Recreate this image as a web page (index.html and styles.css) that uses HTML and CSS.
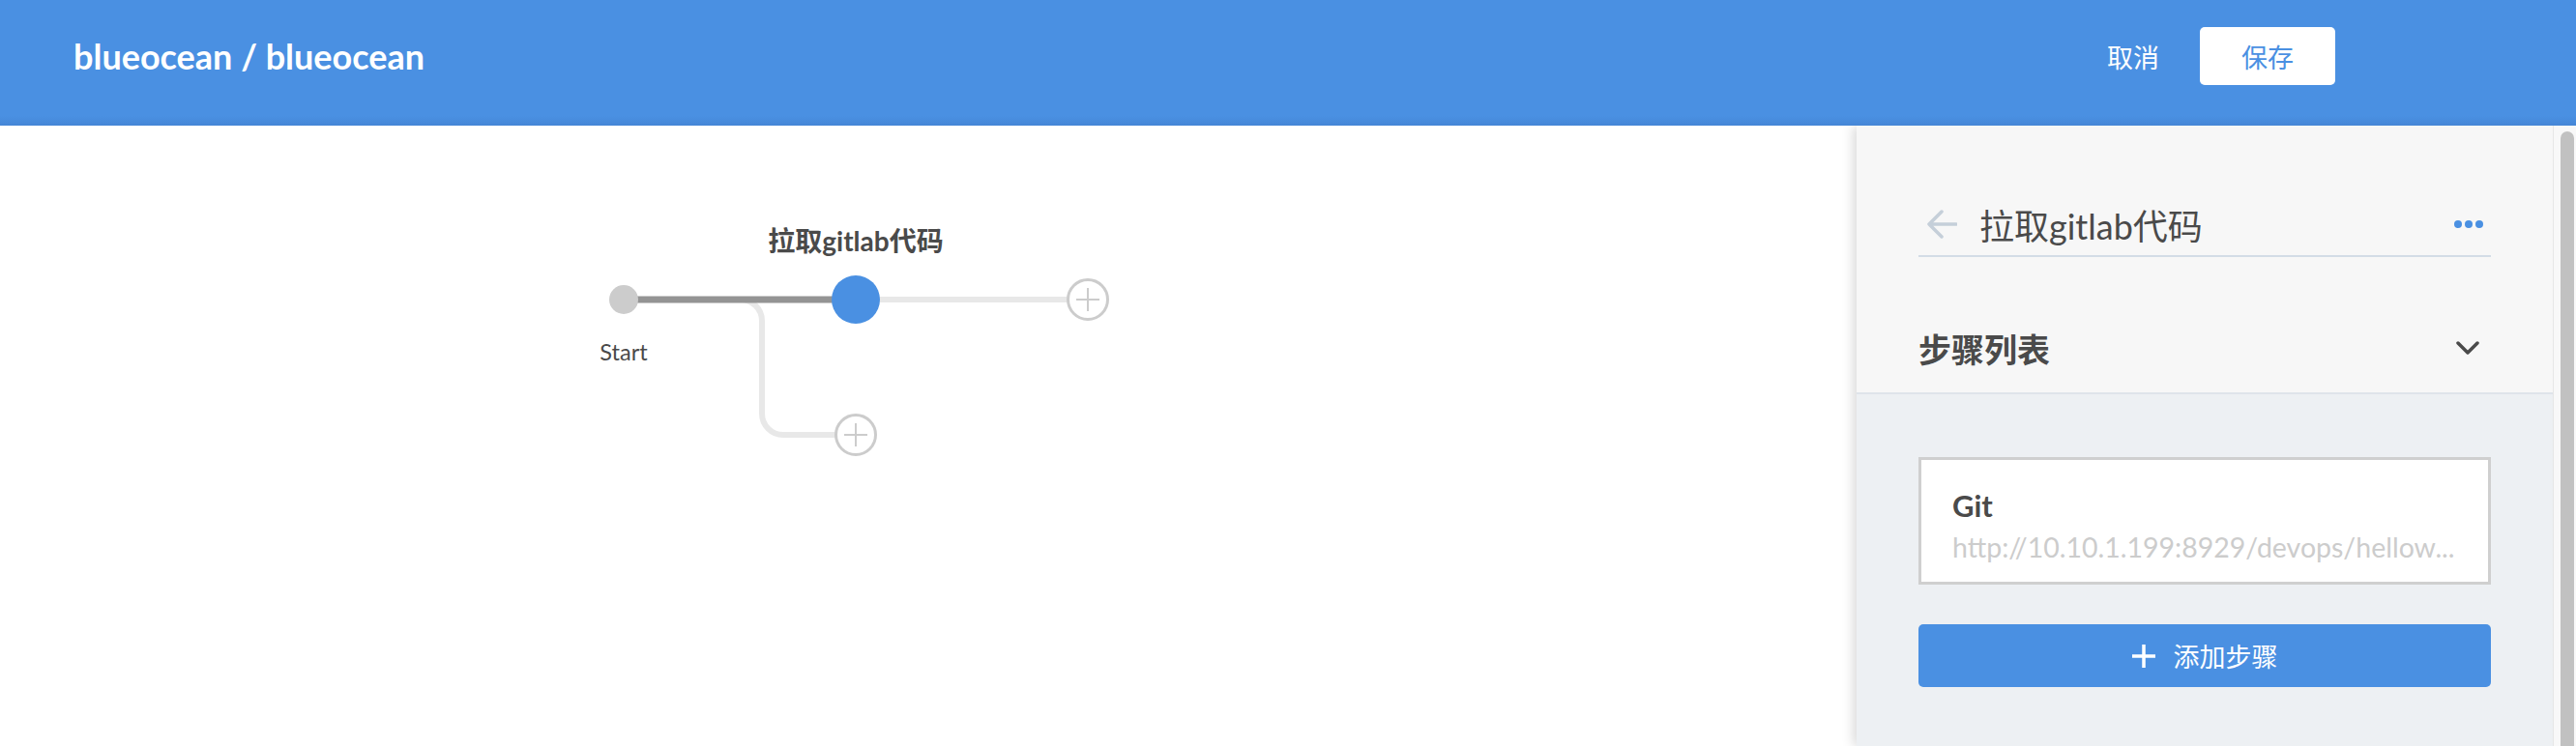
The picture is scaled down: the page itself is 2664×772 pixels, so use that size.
FILE: index.html
```html
<!DOCTYPE html>
<html lang="zh">
<head>
<meta charset="utf-8">
<title>blueocean / blueocean</title>
<link rel="stylesheet" href="styles.css">
</head>
<body>
<header class="topbar">
  <div class="topbar-title">blueocean / blueocean</div>
  <div class="topbar-actions">
    <span class="btn-cancel">取消</span>
    <button class="btn-save">保存</button>
  </div>
</header>
<main class="main">
  <section class="canvas">
    <svg class="graph" width="1920" height="642" viewBox="0 0 1920 642">
      <text class="stage-label" x="885" y="130" text-anchor="middle">拉取gitlab代码</text>
      <path d="M 766 180 A 22 22 0 0 1 788 202 L 788 298 A 22 22 0 0 0 810 320 L 864 320" fill="none" stroke="#e8e8e8" stroke-width="6"/>
      <line x1="885" y1="180" x2="1104" y2="180" stroke="#e8e8e8" stroke-width="6"/>
      <line x1="645" y1="180" x2="885" y2="180" stroke="#949494" stroke-width="7"/>
      <circle cx="645" cy="180" r="15" fill="#cccccc"/>
      <circle cx="885" cy="180" r="25" fill="#4a90e2"/>
      <g class="add-node">
        <circle cx="1125" cy="180" r="20.5" fill="#fff" stroke="#cccccc" stroke-width="3"/>
        <line x1="1113" y1="180" x2="1137" y2="180" stroke="#cccccc" stroke-width="2"/>
        <line x1="1125" y1="168" x2="1125" y2="192" stroke="#cccccc" stroke-width="2"/>
      </g>
      <g class="add-node">
        <circle cx="885" cy="320" r="20.5" fill="#fff" stroke="#cccccc" stroke-width="3"/>
        <line x1="873" y1="320" x2="897" y2="320" stroke="#cccccc" stroke-width="2"/>
        <line x1="885" y1="308" x2="885" y2="332" stroke="#cccccc" stroke-width="2"/>
      </g>
      <text class="start-label" x="645" y="243" text-anchor="middle">Start</text>
    </svg>
  </section>
  <aside class="panel">
    <div class="panel-main">
      <div class="panel-top">
        <div class="step-header">
          <svg class="back-arrow" width="32" height="30" viewBox="0 0 32 30">
            <path d="M 31 15 H 3 M 16 2 L 3 15 L 16 28" fill="none" stroke="#c5cfd9" stroke-width="3.5" stroke-linecap="round" stroke-linejoin="round"/>
          </svg>
          <span class="step-title">拉取gitlab代码</span>
          <svg class="more-dots" width="30" height="8" viewBox="0 0 30 8">
            <circle cx="4" cy="4" r="4" fill="#4a90e2"/>
            <circle cx="15" cy="4" r="4" fill="#4a90e2"/>
            <circle cx="26" cy="4" r="4" fill="#4a90e2"/>
          </svg>
        </div>
        <div class="section-head">
          <span class="section-title">步骤列表</span>
          <svg class="chevron" width="24" height="14" viewBox="0 0 24 14">
            <path d="M 2 2 L 12 12 L 22 2" fill="none" stroke="#4a4a4a" stroke-width="3.5" stroke-linecap="round" stroke-linejoin="round"/>
          </svg>
        </div>
      </div>
      <div class="panel-bottom">
        <div class="step-card">
          <div class="step-name">Git</div>
          <div class="step-desc">http://10.10.1.199:8929/devops/hellow...</div>
        </div>
        <button class="add-step">
          <svg class="plus" width="24" height="24" viewBox="0 0 24 24">
            <path d="M 12 0 V 24 M 0 12 H 24" stroke="#fff" stroke-width="3.5"/>
          </svg>
          <span>添加步骤</span>
        </button>
      </div>
    </div>
    <div class="scrollbar"><div class="thumb"></div></div>
  </aside>
</main>
</body>
</html>
```

FILE: styles.css
```css
* { box-sizing: border-box; }
html, body {
  margin: 0;
  padding: 0;
}
body {
  width: 2664px;
  height: 772px;
  overflow: hidden;
  background: #fff;
  font-family: Lato, "Noto Sans CJK SC", sans-serif;
  color: #4a4a4a;
  display: flex;
  flex-direction: column;
}

.topbar {
  position: relative;
  z-index: 2;
  height: 130px;
  flex: none;
  display: flex;
  align-items: center;
  padding: 0 249px 14px 76px;
  background: linear-gradient(to bottom, #4a90e2 0, #4a90e2 120px, #4586d6 130px);
  color: #fff;
}
.topbar-title {
  font-size: 36px;
  font-weight: 700;
}
.topbar-actions {
  margin-left: auto;
  display: flex;
  align-items: center;
  gap: 42px;
}
.btn-cancel {
  font-family: "Noto Sans CJK SC", sans-serif;
  font-size: 27px;
  color: #fff;
}
.btn-save {
  width: 140px;
  height: 60px;
  border: none;
  border-radius: 5px;
  background: #fff;
  color: #4a90e2;
  font-family: "Noto Sans CJK SC", sans-serif;
  font-size: 27px;
  padding: 0;
}

.main {
  flex: 1;
  display: flex;
  min-height: 0;
  overflow: hidden;
}
.canvas {
  flex: 1;
  min-width: 0;
  position: relative;
  background: #fff;
}
.graph {
  position: absolute;
  left: 0;
  top: 0;
}
.stage-label {
  font-family: Lato, "Noto Sans CJK SC", sans-serif;
  font-weight: 700;
  font-size: 28px;
  fill: #4a4a4a;
}
.start-label {
  font-family: Lato, sans-serif;
  font-size: 23.5px;
  fill: #4a4a4a;
}

.panel {
  width: 744px;
  flex: none;
  display: flex;
  position: relative;
  z-index: 1;
  box-shadow: -3px 0 12px rgba(0, 0, 0, 0.16);
}
.panel-main {
  flex: 1;
  min-width: 0;
  display: flex;
  flex-direction: column;
}
.panel-top {
  background: #f7f7f7;
  padding: 70px 64px 6px;
  border-bottom: 2px solid #dfe4ea;
}
.step-header {
  display: flex;
  align-items: center;
  height: 64px;
  border-bottom: 2px solid #d3dce6;
  box-sizing: content-box;
}
.back-arrow {
  margin-left: 8px;
  flex: none;
}
.step-title {
  margin-left: 23px;
  font-size: 36px;
  color: #4a4a4a;
}
.more-dots {
  margin-left: auto;
  margin-right: 8px;
}
.section-head {
  margin-top: 54px;
  height: 80px;
  display: flex;
  align-items: center;
  justify-content: space-between;
}
.section-title {
  font-size: 34px;
  font-weight: 700;
  color: #4a4a4a;
}
.chevron {
  margin-right: 12px;
}
.panel-bottom {
  flex: 1;
  background: #edf0f3;
  padding: 65px 64px;
}
.step-card {
  background: #fff;
  border: 3px solid #cfcfcf;
  padding: 27px 32px 16px;
}
.step-name {
  font-size: 31px;
  font-weight: 700;
  line-height: 40px;
  color: #4a4a4a;
}
.step-desc {
  margin-top: 3px;
  font-size: 28.5px;
  line-height: 40px;
  color: #cccccc;
  white-space: nowrap;
  overflow: hidden;
  text-overflow: ellipsis;
}
.add-step {
  margin-top: 41px;
  width: 100%;
  height: 65px;
  border: none;
  border-radius: 5px;
  background: #4a90e2;
  color: #fff;
  display: flex;
  align-items: center;
  justify-content: center;
  font-family: "Noto Sans CJK SC", sans-serif;
  font-size: 27px;
  padding: 0;
}
.add-step .plus {
  margin-right: 19px;
}
.scrollbar {
  width: 24px;
  flex: none;
  background: #f8f8f8;
  border-left: 1px solid #e6e6e6;
  padding: 6px 2px 0 7px;
  overflow: hidden;
}
.thumb {
  height: 100%;
  border-radius: 8px 8px 0 0;
  background: #c1c1c1;
}
```
